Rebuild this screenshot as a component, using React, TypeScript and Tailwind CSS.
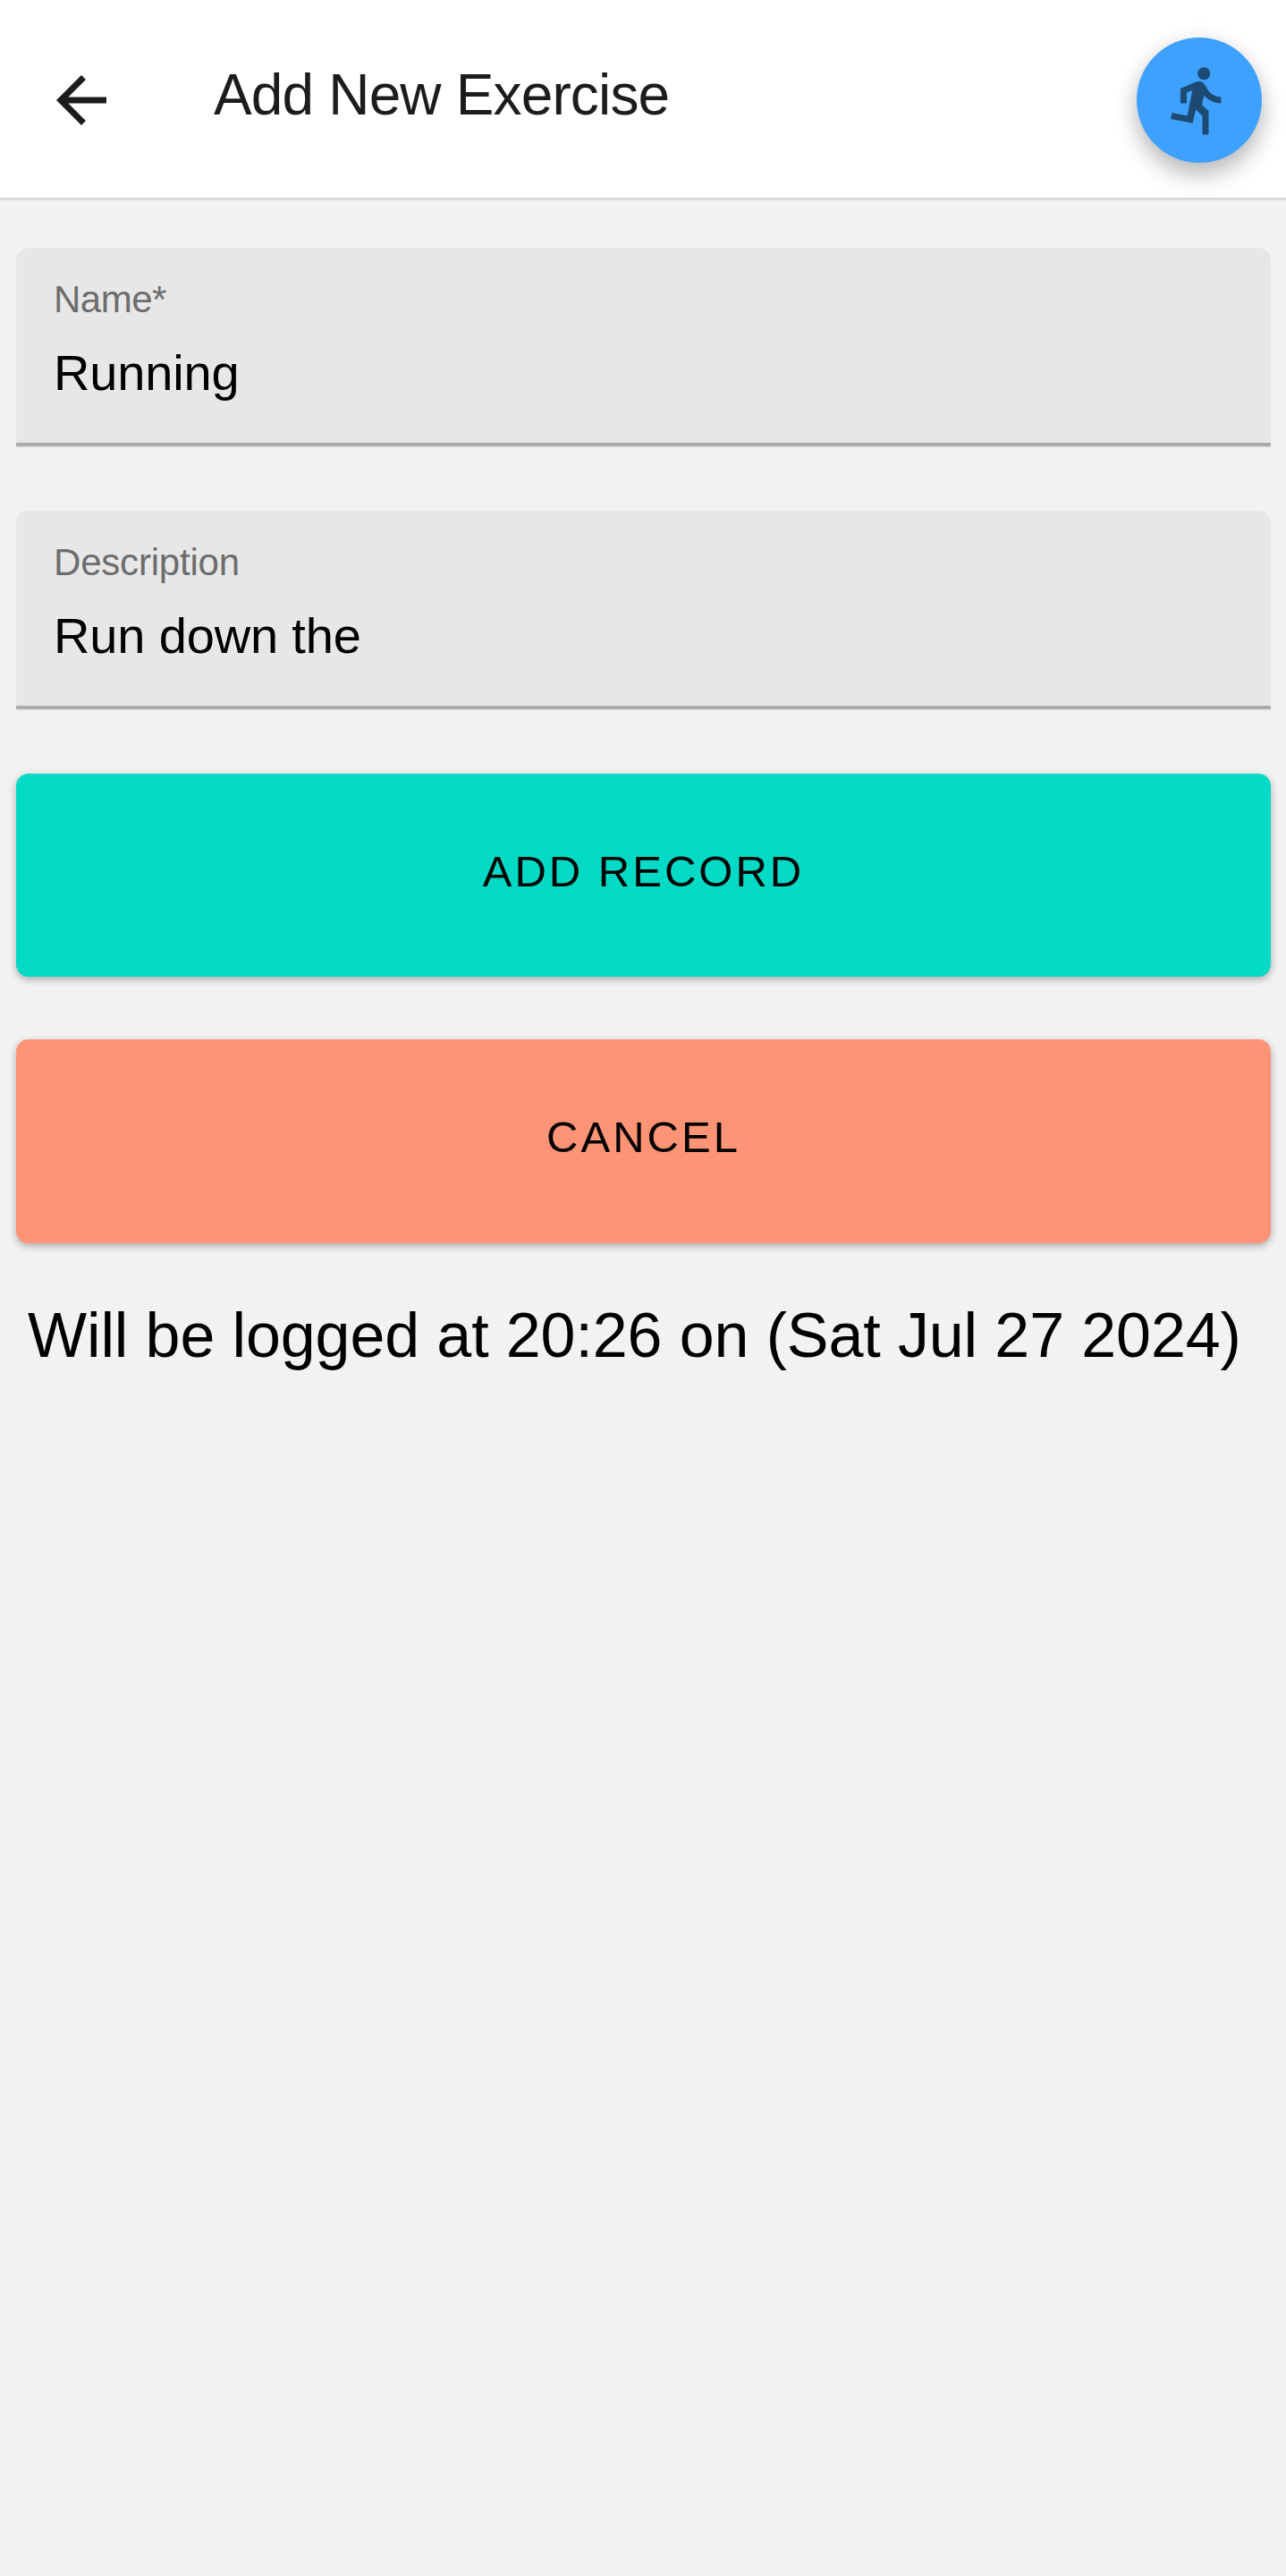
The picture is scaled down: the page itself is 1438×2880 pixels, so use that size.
import React from 'react';
import { MdArrowBack, MdDirectionsRun } from 'react-icons/md';

function Field({ label, value, labelClass }: { label: string; value: string; labelClass: string }) {
  return (
    <div className="flex h-[224px] flex-col rounded-t-[14px] bg-[#e7e7e7]">
      <div className={`pl-[42px] pt-[34px] text-[42px] leading-[48px] text-[#6d6d6d] ${labelClass}`}>{label}</div>
      <div className="mt-[26px] pl-[42px] text-[56px] leading-[64px] tracking-[-0.15px] text-black">{value}</div>
      <div className="mt-auto mb-[2px] h-[4px] bg-[#ababab]" />
    </div>
  );
}

export default function App() {
  return (
    <div className="h-[2880px] w-[1438px] overflow-hidden bg-[#f2f2f2] font-['Liberation_Sans',sans-serif] whitespace-nowrap">
      <header className="flex h-[224px] items-center border-b-[3px] border-[#d8d8d8] bg-white pt-[3px]">
        <MdArrowBack className="ml-[49px] size-[84px] text-[#1c1c1e]" />
        <h1 className="ml-[106px] -mt-[12px] text-[64px] leading-[72px] tracking-[-0.85px] text-[#1c1c1e]">Add New Exercise</h1>
        <button className="ml-auto mr-[27px] flex size-[140px] items-center justify-center rounded-full bg-[#3ea1ff] shadow-[0_14px_26px_rgba(0,0,0,0.24),0_2px_24px_rgba(0,0,0,0.08)]">
          <MdDirectionsRun className="size-[84px] text-[#1d4a73]" />
        </button>
      </header>
      <main className="flex flex-col pl-[18px] pr-[17px] pt-[53px]">
        <div className="flex flex-col gap-[70px]">
          <Field label="Name*" value="Running" labelClass="tracking-[-0.5px]" />
          <Field label="Description" value="Run down the" labelClass="tracking-[-0.2px]" />
          <button className="h-[227px] rounded-[14px] bg-[#03dac6] pb-[10px] text-[49px] leading-[56px] tracking-[3px] shadow-[0_3px_8px_rgba(0,0,0,0.3)]">ADD RECORD</button>
          <button className="h-[228px] rounded-[14px] bg-[#fd9476] pb-[11px] text-[49px] leading-[56px] tracking-[3px] shadow-[0_3px_8px_rgba(0,0,0,0.3)]">CANCEL</button>
        </div>
        <p className="mt-[61px] pl-[13px] text-[70px] leading-[84px] tracking-[-0.12px]">Will be logged at 20:26 on (Sat Jul 27 2024)</p>
      </main>
    </div>
  );
}
